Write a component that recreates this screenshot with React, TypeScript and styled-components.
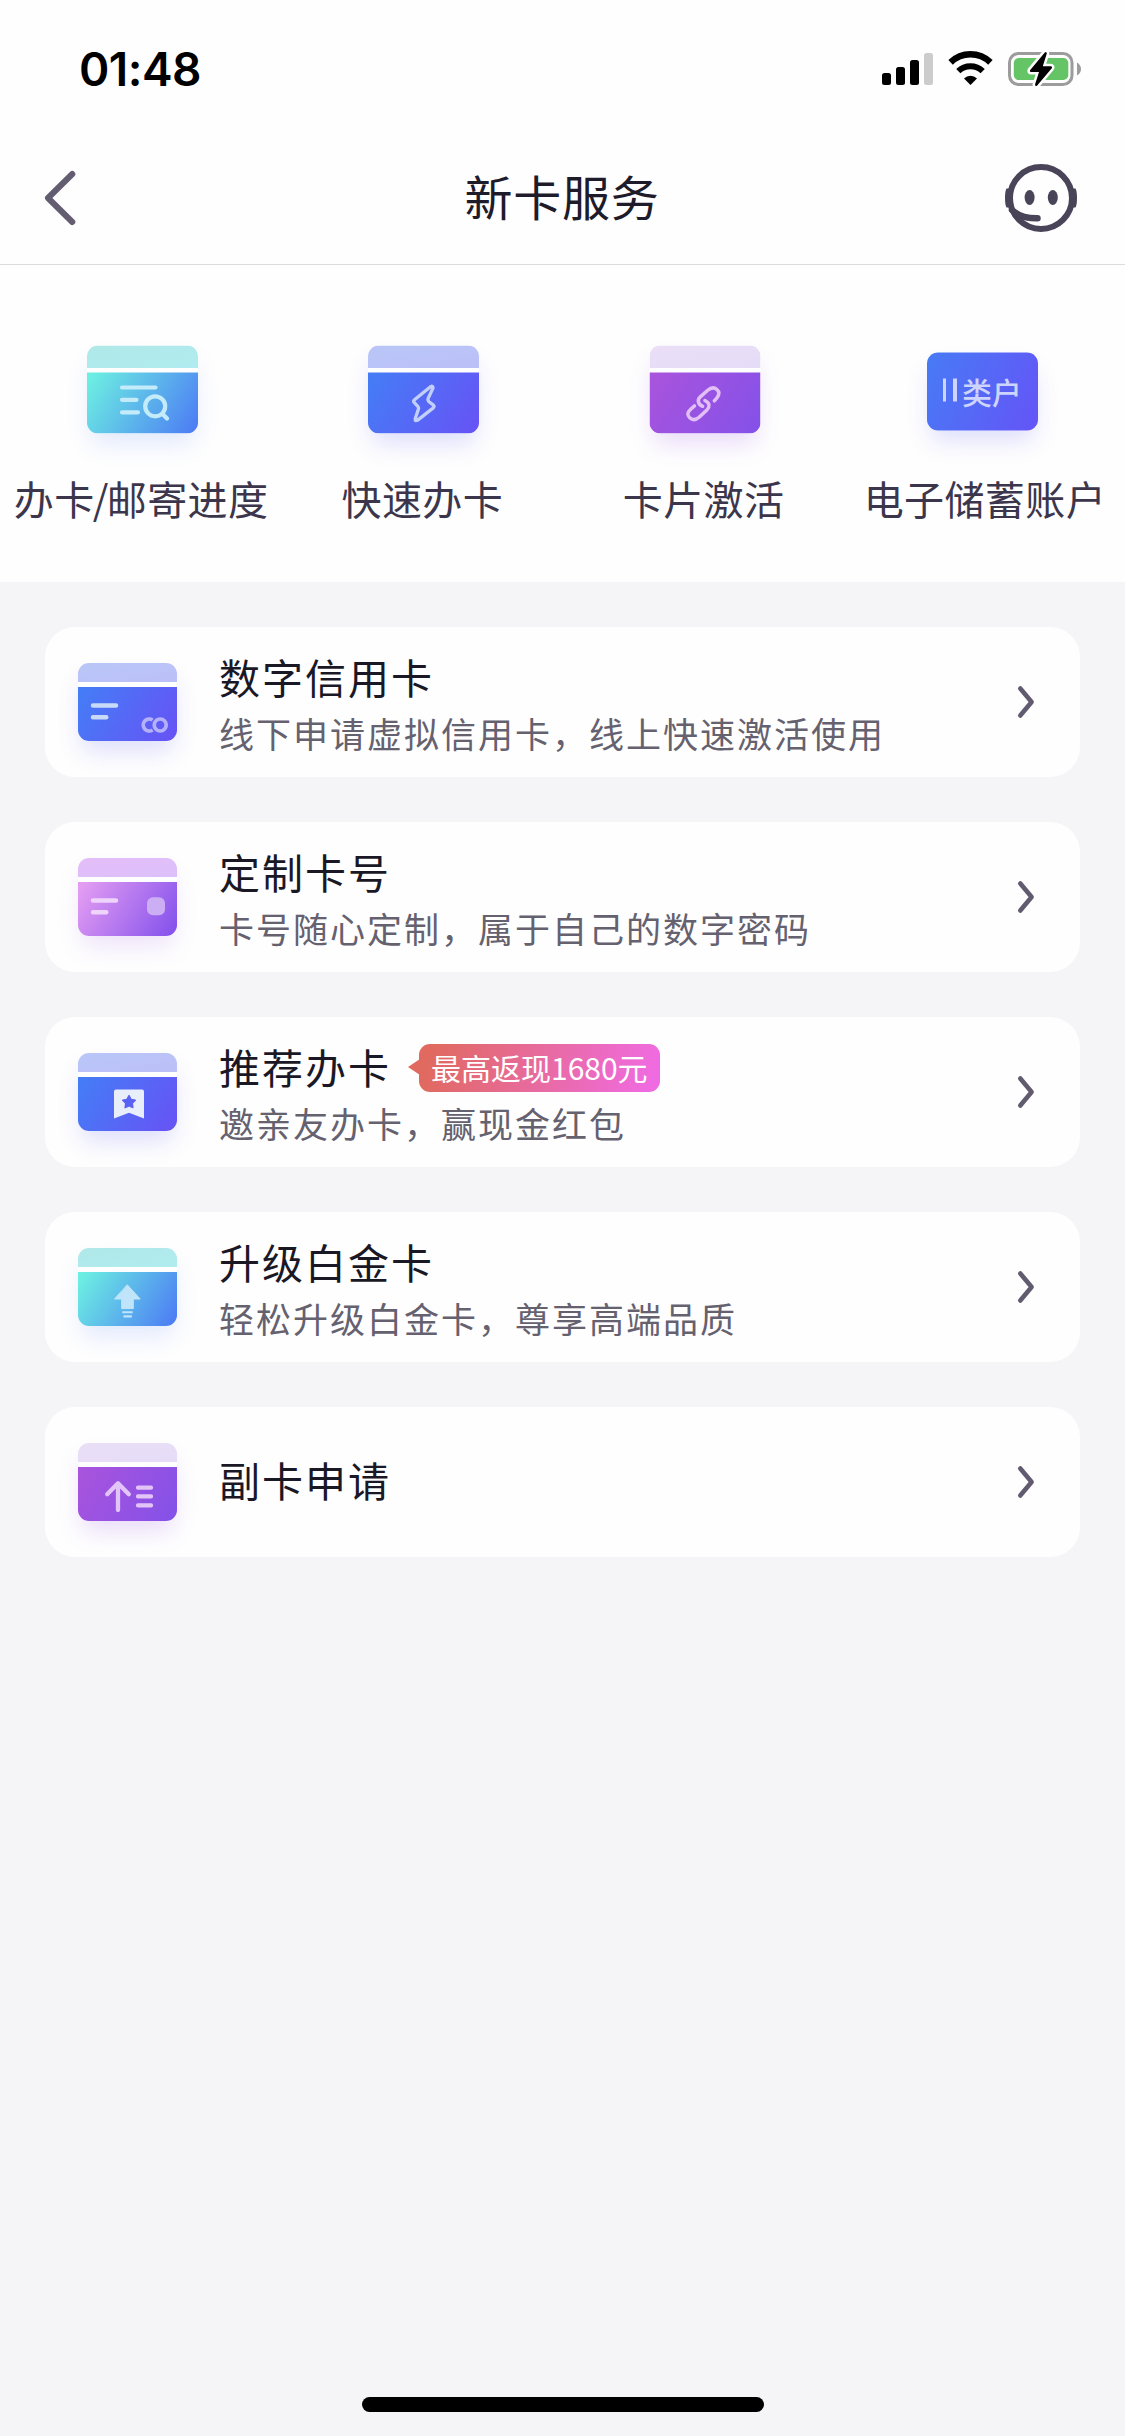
import React from "react";
import styled, { createGlobalStyle } from "styled-components";

const cjk = `"Noto Sans CJK SC", "Noto Sans", sans-serif`;

const GlobalStyle = createGlobalStyle`
  * { box-sizing: border-box; }
  body { margin: 0; background: #f5f5f8; font-family: ${cjk}; }
  svg { display: block; flex: none; overflow: visible; }
`;

const Screen = styled.div`
  width: 1125px;
  height: 2436px;
  display: flex;
  flex-direction: column;
  background: #f5f5f8;
  overflow: hidden;
`;

const StatusBar = styled.div`
  height: 132px;
  padding: 6px 44px 0 79px;
  display: flex;
  align-items: center;
  justify-content: space-between;
  background: #fefefe;
`;

const Clock = styled.span`
  font: 600 46px/54px Inter, sans-serif;
  letter-spacing: -0.5px;
  color: #000;
`;

const StatusIcons = styled.div`
  display: flex;
  align-items: center;
  gap: 15px;
`;

const NavBar = styled.header`
  height: 133px;
  padding: 0 48px 0 43px;
  display: grid;
  grid-template-columns: 72px 1fr 72px;
  align-items: center;
  background: #fefefe;
  border-bottom: 1px solid #dcdcdf;
`;

const PageTitle = styled.h1`
  margin: 0;
  padding: 0 0 6px 4px;
  text-align: center;
  font-size: 48px;
  font-weight: 400;
  line-height: 60px;
  letter-spacing: 0.8px;
  color: #1e1b2a;
`;

const Shortcuts = styled.nav`
  height: 317px;
  padding-top: 80px;
  display: grid;
  grid-template-columns: repeat(4, 1fr);
  background: #fefefe;
`;

const Shortcut = styled.a`
  display: flex;
  flex-direction: column;
  align-items: center;
  gap: 35px;
`;

const ShortcutArt = styled.div<{ $shift: number }>`
  height: 88px;
  display: flex;
  align-items: center;
  transform: translate(${(p) => p.$shift}px, 0.5px);
`;

const ShortcutLabel = styled.span`
  white-space: nowrap;
  font-size: 40px;
  line-height: 60px;
  letter-spacing: 0.4px;
  padding-left: 1px;
  color: #3c364c;
`;

const Slash = styled.span`
  margin: 0 -2px;
`;

const CardFace = styled.div<{ $w: number; $h: number; $shadow: string }>`
  width: ${(p) => p.$w}px;
  height: ${(p) => p.$h}px;
  border-radius: 11px;
  box-shadow: 0 14px 24px -4px ${(p) => p.$shadow};
`;

const AccountTile = styled(CardFace)`
  margin-top: 3px;
  display: flex;
  align-items: center;
  justify-content: center;
  background: linear-gradient(115deg, #477bf5, #6554f7);
  color: #cdd4fd;
  font-size: 30px;
  font-weight: 500;
  line-height: 40px;
  padding-bottom: 2px;
  gap: 5px;
`;

const Numeral = styled.span`
  display: flex;
  gap: 7px;
  &::before, &::after {
    content: "";
    width: 3.5px;
    height: 23px;
    background: #cdd4fd;
  }
`;

const List = styled.main`
  flex: 1;
  padding: 45px;
  display: flex;
  flex-direction: column;
  gap: 45px;
`;

const Row = styled.section`
  height: 150px;
  padding: 0 44px 0 33px;
  display: flex;
  align-items: center;
  border-radius: 30px;
  background: #fefefe;
`;

const RowBody = styled.div<{ $single: boolean }>`
  flex: 1;
  margin-left: 42px;
  padding: ${(p) => (p.$single ? "0 0 6px" : "5px 0 0")};
  display: flex;
  flex-direction: column;
`;

const RowHead = styled.div`
  display: flex;
  align-items: center;
  gap: 28px;
  height: 56px;
`;

const RowTitle = styled.h2`
  margin: 0;
  font-size: 41px;
  font-weight: 400;
  line-height: 56px;
  letter-spacing: 2px;
  color: #1b1826;
`;

const RowNote = styled.p`
  margin: 0;
  font-size: 35px;
  line-height: 58px;
  letter-spacing: 2px;
  color: #65616f;
`;

const Badge = styled.span`
  position: relative;
  height: 48px;
  margin-top: 5px;
  padding: 0 12px;
  border-radius: 11px;
  background: linear-gradient(105deg, #e06a5f 5%, #f06be3 97%);
  color: #fff;
  font-size: 30px;
  line-height: 47px;
  white-space: nowrap;
  &::before {
    content: "";
    position: absolute;
    left: -11px;
    top: 15px;
    border: solid transparent;
    border-width: 8px 12px 8px 0;
    border-right-color: #e06a5f;
  }
`;

const HomeArea = styled.footer`
  height: 49px;
  display: flex;
  justify-content: center;
  padding-top: 10px;
`;

const HomeBar = styled.div`
  width: 402px;
  height: 15px;
  border-radius: 8px;
  background: #000;
`;

type Tone = { top: [string, string]; face: [string, string]; shadow: string };

const tones: Record<string, Tone> = {
  teal: { top: ["#b0e8e8", "#b0ecf0"], face: ["#6ceee2", "#4d7ef4"], shadow: "rgba(75,120,246,.16)" },
  blue: { top: ["#b9c6f7", "#bcc0f8"], face: ["#457cf6", "#6654f5"], shadow: "rgba(90,90,246,.2)" },
  violet: { top: ["#eadff6", "#e5dcf8"], face: ["#a854dd", "#8551e8"], shadow: "rgba(150,80,230,.2)" },
  pink: { top: ["#e4bdf8", "#dcc0fb"], face: ["#e29cf2", "#8653ec"], shadow: "rgba(150,80,230,.16)" },
};

type ArtProps = { id: string; tone: Tone; w: number; h: number; band: number; body: number; children: React.ReactNode };

const CardArt = ({ id, tone, w, h, band, body, children }: ArtProps) => (
  <CardFace $w={w} $h={h} $shadow={tone.shadow}>
    <svg width={w} height={h} viewBox={`0 0 ${w} ${h}`} fill="none" strokeLinecap="round" strokeLinejoin="round">
      <defs>
        <linearGradient id={`${id}t`} x1="0" y1="0" x2="1" y2="1">
          <stop stopColor={tone.top[0]} />
          <stop offset="1" stopColor={tone.top[1]} />
        </linearGradient>
        <linearGradient id={`${id}f`} gradientUnits="userSpaceOnUse" x1="6" y1={body} x2={w - 6} y2={h}>
          <stop stopColor={tone.face[0]} />
          <stop offset="1" stopColor={tone.face[1]} />
        </linearGradient>
        <clipPath id={`${id}c`}>
          <rect width={w} height={h} rx="11" />
        </clipPath>
      </defs>
      <g clipPath={`url(#${id}c)`}>
        <rect width={w} height={h} fill="#fefefe" />
        <rect width={w} height={band} fill={`url(#${id}t)`} />
        <rect y={body} width={w} height={h - body} fill={`url(#${id}f)`} />
      </g>
      {children}
    </svg>
  </CardFace>
);

const shortcuts = [
  {
    key: "progress", label: <span>办卡<Slash>/</Slash>邮寄进度</span>, tone: tones.teal, shift: 2,
    glyph: (
      <g stroke="#c3ebfa" strokeWidth="4.2">
        <path d="M35 42H68.5M35 54.3H49.5M35 66.8H51" />
        <circle cx="68.2" cy="60.8" r="10" />
        <path d="M75.5 68.5L80 73" />
      </g>
    ),
  },
  {
    key: "quick", label: "快速办卡", tone: tones.blue, shift: 2,
    glyph: (
      <path
        d="M62.5 41.2L46.5 54.2Q44.8 55.7 46.3 57.2L49.8 60.8Q51 62.2 50.3 64L47.2 73.2Q46.7 76.3 49.7 74.6L65.3 62.4Q66.8 61 65.4 59.6L61 56.2Q59.5 54.8 60.2 52.8L65 42.6Q65.2 39.8 62.5 41.2Z"
        stroke="#c3cffb" strokeWidth="3.3"
      />
    ),
  },
  {
    key: "activate", label: "卡片激活", tone: tones.violet, shift: 1.5,
    glyph: (
      <g stroke="#e2bff5" strokeWidth="3.5">
        <path d="M64.8 55.3L67.4 52.3C70 49 70.2 46.4 67.4 44C64.6 41.4 61.2 42.2 58.2 44.8L50.8 51.4C47.4 54.4 48.4 58.8 53.2 60.8" />
        <path d="M45 60.4L41.2 63.8C37.8 67 37.4 69.6 40.2 72.2C43 74.8 46.6 74.4 49.6 71.8L57.4 64.4C60.6 61 60.4 57.6 55.4 55" />
      </g>
    ),
  },
];

type Item = { title: string; note?: string; badge?: string; tone: Tone; glyph: React.ReactNode };

const items: Item[] = [
  {
    title: "数字信用卡", note: "线下申请虚拟信用卡，线上快速激活使用", tone: tones.blue,
    glyph: (
      <>
        <path d="M15 42.6H38M15 54.2H28.3" stroke="#c9daf9" strokeWidth="4.5" />
        <g stroke="#b4b1fa" strokeWidth="3.7" strokeLinecap="butt">
          <circle cx="82.2" cy="62" r="6" />
          <path d="M74.6 57A6 6 0 1 0 74.6 67" />
        </g>
      </>
    ),
  },
  {
    title: "定制卡号", note: "卡号随心定制，属于自己的数字密码", tone: tones.pink,
    glyph: (
      <>
        <path d="M15 42.6H38M15 54.2H28.3" stroke="#eed3fb" strokeWidth="4.5" />
        <rect x="69" y="39.3" width="18" height="18" rx="6" fill="#ccaef4" />
      </>
    ),
  },
  {
    title: "推荐办卡", note: "邀亲友办卡，赢现金红包", badge: "最高返现1680元", tone: tones.blue,
    glyph: (
      <>
        <path d="M38 36.5H64Q66 36.5 66 38.5V65.6L51 59.8L36 65.6V38.5Q36 36.5 38 36.5Z" fill="#e9eefb" />
        <path d="M51 42.6L53.1 46.4L57.3 47.2L54.3 50.3L54.9 54.6L51 52.8L47.1 54.6L47.7 50.3L44.7 47.2L48.9 46.4Z" fill="#5a62f4" stroke="#5a62f4" strokeWidth="1.4" />
      </>
    ),
  },
  {
    title: "升级白金卡", note: "轻松升级白金卡，尊享高端品质", tone: tones.teal,
    glyph: (
      <g fill="#c0e5fa">
        <path d="M49.5 37L62.2 51H55.3V60.6H43.7V51H36.8Z" stroke="#c0e5fa" strokeWidth="1" />
        <path d="M44.3 63.2H54.7V65.2H44.3ZM45.5 67.3H53.8V69.4H45.5Z" />
      </g>
    ),
  },
  {
    title: "副卡申请", tone: tones.violet,
    glyph: (
      <g stroke="#e3c4f8" strokeWidth="4.3">
        <path d="M40 41V67M29.2 51.3L40 40.2L50.8 51.3" />
        <path d="M60 44.7H73M60 53.4H73M60 62.4H73" />
      </g>
    ),
  },
];

const Signal = () => (
  <svg width="51" height="34" viewBox="0 0 51 34">
    <rect x="0" y="21" width="9" height="12" rx="2.5" />
    <rect x="14" y="15" width="9" height="18" rx="2.5" />
    <rect x="28" y="8" width="9" height="25" rx="2.5" />
    <rect x="42" y="1" width="9" height="32" rx="2.5" fill="#cccccc" />
  </svg>
);

const Wifi = () => (
  <svg width="45" height="34" viewBox="0 0 45 34" fill="none" stroke="#000">
    <path d="M2.6 11.2A28.5 28.5 0 0 1 42.4 11.2" transform="translate(0 -0.8)" strokeWidth="6.4" />
    <path d="M10.3 19.2A17.5 17.5 0 0 1 34.7 19.2" strokeWidth="6" />
    <path d="M16 26.4A9.5 9.5 0 0 1 29 26.4L22.5 33Z" fill="#000" stroke="none" />
  </svg>
);

const Battery = () => (
  <svg width="73" height="34" viewBox="0 0 73 34">
    <rect x="1.5" y="1.5" width="62.5" height="31" rx="9" fill="none" stroke="#9c9c9c" strokeWidth="3" />
    <rect x="5.8" y="6" width="54.5" height="22" rx="5" fill="#65c466" />
    <path d="M69 10.5Q73 13 73 17T69 23.5Z" fill="#9c9c9c" />
    <path d="M36.8 0.4L22 18.2Q21.3 19.8 23 20H31L27 32.6Q27.4 35 29.2 33.6L43.8 16.2Q44.7 14.5 42.6 14.3H34.8L38.8 1.4Q38.6 -1 36.8 0.4Z" stroke="#fff" strokeWidth="5" paintOrder="stroke" />
  </svg>
);

const Headset = () => (
  <svg width="72" height="70" viewBox="0 0 72 70" fill="none" stroke="#4a4458">
    <circle cx="36" cy="35" r="31" strokeWidth="6" />
    <path d="M5 25.5H1.5Q0 28 0 35T1.5 44.5H5ZM67 25.5H70.5Q72 28 72 35T70.5 44.5H67Z" fill="#4a4458" stroke="none" />
    <ellipse cx="24.6" cy="34.5" rx="5" ry="7.6" fill="#4a4458" stroke="none" />
    <ellipse cx="47.8" cy="34.5" rx="5" ry="7.6" fill="#4a4458" stroke="none" />
    <path d="M7 47Q16 55.5 32.5 55.3" strokeWidth="6.5" strokeLinecap="round" />
  </svg>
);

export default function App() {
  return (
    <Screen>
      <GlobalStyle />
      <StatusBar>
        <Clock>01:48</Clock>
        <StatusIcons>
          <Signal />
          <Wifi />
          <Battery />
        </StatusIcons>
      </StatusBar>
      <NavBar>
        <svg width="34" height="56" viewBox="0 0 34 56" fill="none" stroke="#645d72" strokeWidth="6" strokeLinecap="round" strokeLinejoin="round">
          <path d="M29.3 4L5 28L29.3 52" />
        </svg>
        <PageTitle>新卡服务</PageTitle>
        <Headset />
      </NavBar>
      <Shortcuts>
        {shortcuts.map((s) => (
          <Shortcut key={s.key}>
            <ShortcutArt $shift={s.shift}>
              <CardArt id={s.key} tone={s.tone} w={111} h={88} band={22.5} body={27}>
                {s.glyph}
              </CardArt>
            </ShortcutArt>
            <ShortcutLabel>{s.label}</ShortcutLabel>
          </Shortcut>
        ))}
        <Shortcut>
          <ShortcutArt $shift={-2}>
            <AccountTile $w={111} $h={78} $shadow="rgba(90,90,246,.2)">
              <Numeral />
              类户
            </AccountTile>
          </ShortcutArt>
          <ShortcutLabel>电子储蓄账户</ShortcutLabel>
        </Shortcut>
      </Shortcuts>
      <List>
        {items.map((item, i) => (
          <Row key={item.title}>
            <CardArt id={`r${i}`} tone={item.tone} w={99} h={78} band={19} body={24}>
              {item.glyph}
            </CardArt>
            <RowBody $single={!item.note}>
              <RowHead>
                <RowTitle>{item.title}</RowTitle>
                {item.badge && <Badge>{item.badge}</Badge>}
              </RowHead>
              {item.note && <RowNote>{item.note}</RowNote>}
            </RowBody>
            <svg width="20" height="36" viewBox="0 0 20 36" fill="none" stroke="#625b70" strokeWidth="4.6" strokeLinecap="round" strokeLinejoin="round">
              <path d="M4.3 4.5L15.6 18L4.3 31.5" />
            </svg>
          </Row>
        ))}
      </List>
      <HomeArea>
        <HomeBar />
      </HomeArea>
    </Screen>
  );
}
